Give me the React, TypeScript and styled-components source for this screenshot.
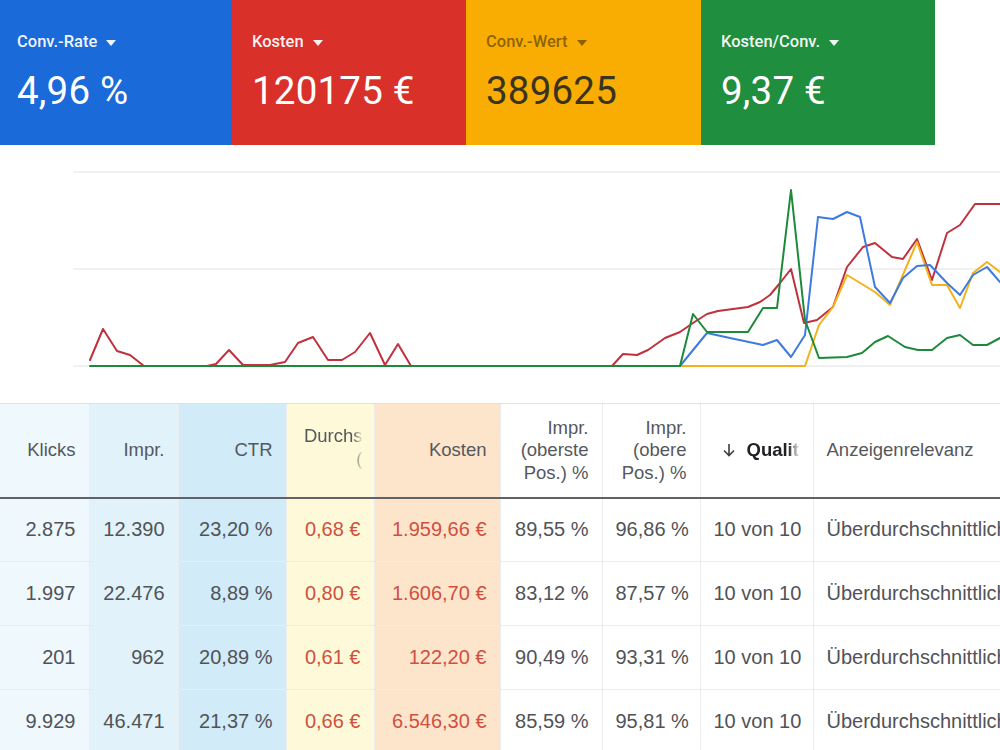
import React from "react";
import styled, { createGlobalStyle } from "styled-components";

const GlobalStyle = createGlobalStyle`
  html, body { margin: 0; padding: 0; background: #ffffff; }
  #root { width: 1000px; height: 750px; overflow: hidden; }
`;

const Page = styled.div`
  width: 1000px;
  height: 750px;
  overflow: hidden;
  background: #ffffff;
  display: flex;
  flex-direction: column;
`;

/* ---------- metric cards ---------- */

const CardRow = styled.div`
  display: grid;
  grid-template-columns: 232px 234px 235px 234px;
  height: 145px;
  flex: 0 0 auto;
`;

type Tone = "blue" | "red" | "yellow" | "green";

const cardBg: Record<Tone, string> = {
  blue: "#1b6ad9",
  red: "#d9302a",
  yellow: "#f9ad03",
  green: "#1f8e3f",
};

const Card = styled.div<{ $tone: Tone; $inset?: number }>`
  background: ${(p) => cardBg[p.$tone]};
  padding: 31px 0 0 ${(p) => p.$inset ?? 20}px;
  box-sizing: border-box;
  display: flex;
  flex-direction: column;
  font-family: Roboto, "Noto Sans", sans-serif;
  color: ${(p) => (p.$tone === "yellow" ? "#3a3320" : "#ffffff")};
`;

const CardLabel = styled.div<{ $dark?: boolean }>`
  display: flex;
  align-items: center;
  gap: 9px;
  font-size: 16.5px;
  font-weight: 500;
  line-height: 22px;
  color: ${(p) => (p.$dark ? "rgba(70, 50, 0, 0.62)" : "rgba(255,255,255,0.94)")};
`;

const Caret = styled.span<{ $dark?: boolean }>`
  width: 0;
  height: 0;
  border-left: 5.5px solid transparent;
  border-right: 5.5px solid transparent;
  border-top: 6px solid ${(p) => (p.$dark ? "rgba(70, 50, 0, 0.62)" : "rgba(255,255,255,0.94)")};
  margin-top: 1px;
`;

const CardValue = styled.div`
  margin-top: 16px;
  font-size: 38.5px;
  font-weight: 400;
  line-height: 44px;
  letter-spacing: 0.2px;
`;

/* ---------- chart ---------- */

const ChartArea = styled.div`
  height: 258px;
  flex: 0 0 auto;
`;

/* ---------- table ---------- */

const TableWrap = styled.div`
  flex: 1 1 auto;
  overflow: hidden;
`;

const Table = styled.table`
  border-collapse: collapse;
  table-layout: fixed;
  width: 1033px;
  font-family: "Liberation Sans", Arial, sans-serif;
`;

type Col = "c1" | "c2" | "c3" | "c4" | "c5" | "plain";

const colBg: Record<Col, string> = {
  c1: "#eef8fd",
  c2: "#e1f2fb",
  c3: "#d1ebf8",
  c4: "#fefad9",
  c5: "#fde5cc",
  plain: "#ffffff",
};

const HeadCell = styled.th<{ $col: Col; $align?: "left" | "right" }>`
  background: ${(p) => colBg[p.$col]};
  height: 94px;
  padding: 0 13px;
  box-sizing: border-box;
  text-align: ${(p) => p.$align ?? "right"};
  vertical-align: middle;
  font-weight: 400;
  font-size: 18.5px;
  line-height: 22.5px;
  color: #55585c;
  border-top: 1px solid #e3e3e3;
  border-right: 1px solid rgba(0, 0, 0, 0.07);
  border-bottom: 2px solid #5f6266;
  white-space: nowrap;
  overflow: hidden;
`;

const Cell = styled.td<{ $col: Col; $align?: "left" | "right"; $red?: boolean }>`
  background: ${(p) => colBg[p.$col]};
  height: 64px;
  padding: 0 13px;
  box-sizing: border-box;
  text-align: ${(p) => p.$align ?? "right"};
  vertical-align: middle;
  font-size: 20px;
  color: ${(p) => (p.$red ? "#d0503f" : "#505357")};
  border-right: 1px solid rgba(0, 0, 0, 0.07);
  border-bottom: 1px solid rgba(0, 0, 0, 0.07);
  white-space: nowrap;
  overflow: hidden;
`;

const ClipLines = styled.div`
  display: inline-block;
  width: 63px;
  overflow: hidden;
  text-align: right;
  -webkit-mask-image: linear-gradient(to right, #000 85%, transparent 100%);
  mask-image: linear-gradient(to right, #000 85%, transparent 100%);
`;

const SortHead = styled.div`
  display: flex;
  align-items: center;
  justify-content: flex-end;
  gap: 10px;
  color: #202124;
  font-weight: 700;
`;

const SortLabel = styled.span`
  display: block;
  width: 53px;
  overflow: hidden;
  -webkit-mask-image: linear-gradient(to right, #000 78%, transparent 100%);
  mask-image: linear-gradient(to right, #000 78%, transparent 100%);
`;

type Pt = [number, number];

const red: Pt[] = [
  [90, 360], [103, 329], [117, 351], [130, 355], [144, 366], [207, 366], [216, 364],
  [229, 350], [243, 365], [270, 365], [285, 362], [298, 343], [313, 337], [328, 360],
  [342, 360], [355, 352], [370, 333], [385, 365], [398, 344], [411, 366], [612, 366],
  [623, 354], [637, 355], [648, 350], [665, 338], [680, 332], [693, 323], [707, 314],
  [718, 311], [733, 309], [748, 307], [760, 302], [770, 295], [780, 283], [791, 269],
  [804, 323], [817, 320], [833, 307], [847, 267], [863, 247], [875, 243], [892, 257],
  [903, 259], [917, 239], [932, 280], [947, 233], [960, 225], [975, 204], [1000, 204],
];

const yellow: Pt[] = [
  [680, 366], [805, 366], [819, 325], [833, 307], [847, 275], [875, 292], [890, 305],
  [917, 242], [932, 285], [947, 285], [960, 308], [973, 273], [987, 262], [1000, 272],
];

const blue: Pt[] = [
  [680, 366], [707, 333], [730, 338], [763, 345], [777, 340], [791, 357], [805, 335],
  [818, 217], [833, 219], [847, 212], [860, 217], [875, 287], [890, 303], [903, 278],
  [917, 266], [930, 265], [947, 283], [960, 295], [973, 275], [987, 267], [1000, 282],
];

const green: Pt[] = [
  [90, 366], [680, 366], [693, 314], [707, 332], [748, 332], [763, 308], [777, 308],
  [791, 190], [805, 320], [819, 358], [847, 357], [862, 353], [875, 342], [888, 336],
  [905, 347], [918, 350], [932, 350], [947, 338], [960, 335], [973, 345], [987, 345],
  [1000, 338],
];

const TOP = 145;
const toPoints = (pts: Pt[]) => pts.map(([x, y]) => `${x},${y - TOP}`).join(" ");

const series: { pts: Pt[]; color: string }[] = [
  { pts: red, color: "#c0313e" },
  { pts: yellow, color: "#f3b21c" },
  { pts: blue, color: "#3d7be0" },
  { pts: green, color: "#1d8a3a" },
];

const Chart = () => (
  <svg width="1000" height="258" viewBox="0 0 1000 258">
    {[172, 269, 366].map((y) => (
      <line key={y} x1="73" x2="1000" y1={y - TOP} y2={y - TOP} stroke="#e4e4e4" strokeWidth="1.2" />
    ))}
    {series.map((s) => (
      <polyline
        key={s.color}
        points={toPoints(s.pts)}
        fill="none"
        stroke={s.color}
        strokeWidth="2"
        strokeLinejoin="round"
        strokeLinecap="round"
      />
    ))}
  </svg>
);

const ArrowDown = () => (
  <svg width="16" height="16" viewBox="0 0 16 16">
    <path d="M8 2v11M3 8.5l5 5 5-5" fill="none" stroke="#3c4043" strokeWidth="1.6" />
  </svg>
);

const rows = [
  ["2.875", "12.390", "23,20 %", "0,68 €", "1.959,66 €", "89,55 %", "96,86 %"],
  ["1.997", "22.476", "8,89 %", "0,80 €", "1.606,70 €", "83,12 %", "87,57 %"],
  ["201", "962", "20,89 %", "0,61 €", "122,20 €", "90,49 %", "93,31 %"],
  ["9.929", "46.471", "21,37 %", "0,66 €", "6.546,30 €", "85,59 %", "95,81 %"],
];

const cols: Col[] = ["c1", "c2", "c3", "c4", "c5", "plain", "plain"];
const widths = [89, 89, 108, 88, 126, 102, 98, 113, 220];

export default function App() {
  return (
    <Page>
      <GlobalStyle />
      <CardRow>
        <Card $tone="blue" $inset={17}>
          <CardLabel>Conv.-Rate <Caret /></CardLabel>
          <CardValue>4,96 %</CardValue>
        </Card>
        <Card $tone="red">
          <CardLabel>Kosten <Caret /></CardLabel>
          <CardValue>120175 €</CardValue>
        </Card>
        <Card $tone="yellow">
          <CardLabel $dark>Conv.-Wert <Caret $dark /></CardLabel>
          <CardValue>389625</CardValue>
        </Card>
        <Card $tone="green">
          <CardLabel>Kosten/Conv. <Caret /></CardLabel>
          <CardValue>9,37 €</CardValue>
        </Card>
      </CardRow>
      <ChartArea>
        <Chart />
      </ChartArea>
      <TableWrap>
        <Table>
          <colgroup>
            {widths.map((w, i) => (
              <col key={i} style={{ width: w }} />
            ))}
          </colgroup>
          <thead>
            <tr>
              <HeadCell $col="c1">Klicks</HeadCell>
              <HeadCell $col="c2">Impr.</HeadCell>
              <HeadCell $col="c3">CTR</HeadCell>
              <HeadCell $col="c4" $align="left">
                <ClipLines>
                  Durchs<br />(
                </ClipLines>
              </HeadCell>
              <HeadCell $col="c5">Kosten</HeadCell>
              <HeadCell $col="plain">
                Impr.<br />(oberste<br />Pos.) %
              </HeadCell>
              <HeadCell $col="plain">
                Impr.<br />(obere<br />Pos.) %
              </HeadCell>
              <HeadCell $col="plain">
                <SortHead>
                  <ArrowDown />
                  <SortLabel>Qualitätsfaktor</SortLabel>
                </SortHead>
              </HeadCell>
              <HeadCell $col="plain" $align="left">Anzeigenrelevanz</HeadCell>
            </tr>
          </thead>
          <tbody>
            {rows.map((r, i) => (
              <tr key={i}>
                {r.map((v, j) => (
                  <Cell key={j} $col={cols[j]} $red={j === 3 || j === 4}>
                    {v}
                  </Cell>
                ))}
                <Cell $col="plain">10 von 10</Cell>
                <Cell $col="plain" $align="left">Überdurchschnittlich</Cell>
              </tr>
            ))}
          </tbody>
        </Table>
      </TableWrap>
    </Page>
  );
}
